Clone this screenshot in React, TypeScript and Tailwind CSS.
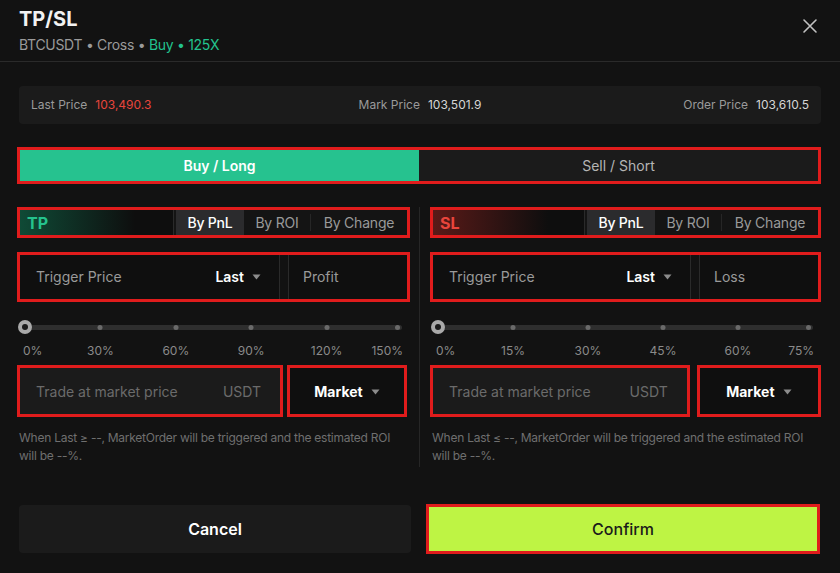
import React from "react";

const RED = "border-[#e01c1c]";

function Caret() {
  return (
    <svg width="9" height="6" viewBox="0 0 9 6" className="ml-[8px] mt-px">
      <path d="M0.5 0.5h8L4.5 5.5z" fill="#8c8c8c" />
    </svg>
  );
}

function ModeRow({ label, color, glow }: { label: string; color: string; glow: string }) {
  return (
    <div className={`flex h-[31px] border-[3px] ${RED} bg-[#0e0e0e]`}>
      <div className="flex flex-1 items-center border-r border-[#2a2a2a]" style={{ backgroundImage: `linear-gradient(90deg, ${glow} 0%, rgba(0,0,0,0) 115px)` }}>
        <span className="pl-[7px] text-[16px] font-bold" style={{ color }}>{label}</span>
      </div>
      <div className="flex items-stretch bg-[#141414] text-[14px] tracking-[-0.2px] text-[#9a9a9a]">
        <div className="ml-[2px] flex w-[68px] items-center justify-center bg-[#2b2b2d] font-medium text-white">By PnL</div>
        <div className="flex w-[66px] items-center justify-center">By ROI</div>
        <div className="my-[4px] w-px bg-[#262626]" />
        <div className="flex w-[96px] items-center justify-center">By Change</div>
      </div>
    </div>
  );
}

function TriggerRow({ right }: { right: string }) {
  return (
    <div className={`mt-[14px] flex h-[50px] border-[3px] ${RED} bg-[#121212]`}>
      <div className="flex flex-1 items-center border-r border-[#2a2a2a] bg-[#0f0f0f] pb-px pl-[16px] pr-[18px] text-[14px]">
        <span className="text-[#9a9a9a]">Trigger Price</span>
        <span className="ml-auto font-semibold text-white">Last</span>
        <Caret />
      </div>
      <div className="w-[8px]" />
      <div className="flex w-[119px] items-center border-l border-[#2a2a2a] bg-[#0f0f0f] pb-px pl-[14px] text-[14px] text-[#9a9a9a]">{right}</div>
    </div>
  );
}

function Slider({ labels }: { labels: string[] }) {
  return (
    <div className="mt-[18px]">
      <div className="relative mx-[8px] h-[14px]">
        <div className="absolute left-0 right-0 top-[5px] h-[5px] rounded-full bg-[#2e2e2e]" />
        {[1, 2, 3, 4].map((i) => (
          <div key={i} className="absolute top-[5px] h-[5px] w-[5px] -translate-x-1/2 rounded-full bg-[#6a6a6a]" style={{ left: `${i * 20}%` }} />
        ))}
        <div className="absolute right-[2px] top-[5px] h-[5px] w-[5px] rounded-full bg-[#6a6a6a]" />
        <div className="absolute left-[-7px] top-0 flex h-[14px] w-[14px] items-center justify-center rounded-full bg-[#a9a9a9]">
          <div className="h-[6px] w-[6px] rounded-full bg-[#1a1a1a]" />
        </div>
      </div>
      <div className="relative mx-[8px] mt-[10px] h-[14px] text-[12px] leading-[14px] text-[#8a8a8a]">
        {labels.map((l, i) => (
          <span
            key={l}
            className={i === 0 ? "absolute left-[-2px]" : i === 5 ? "absolute right-[-1px]" : "absolute -translate-x-1/2"}
            style={i > 0 && i < 5 ? { left: `${i * 20}%` } : undefined}
          >
            {l}
          </span>
        ))}
      </div>
    </div>
  );
}

function MarketRow({ inputW, gap, marketW }: { inputW: number; gap: number; marketW: number }) {
  return (
    <div className="mt-[7px] flex h-[52px]" style={{ gap }}>
      <div className={`flex items-center border-[3px] ${RED} bg-[#1b1b1b] pl-[16px] pr-[19px] text-[14px] text-[#6b6b6b]`} style={{ width: inputW }}>
        <span>Trade at market price</span>
        <span className="ml-auto">USDT</span>
      </div>
      <div className={`flex items-center justify-center border-[3px] ${RED} bg-[#0f0f0f] text-[14px] font-bold text-white`} style={{ width: marketW }}>
        Market
        <Caret />
      </div>
    </div>
  );
}

function Column({ label, color, glow, right, labels, sign, inputW, gap, marketW }: {
  label: string; color: string; glow: string; right: string; labels: string[]; sign: string;
  inputW: number; gap: number; marketW: number;
}) {
  return (
    <div className="flex flex-col">
      <ModeRow label={label} color={color} glow={glow} />
      <TriggerRow right={right} />
      <Slider labels={labels} />
      <MarketRow inputW={inputW} gap={gap} marketW={marketW} />
      <p className="mt-[12px] pl-[2px] pr-[14px] text-[12px] leading-[18px] tracking-[-0.25px] text-[#6f6f6f]">
        When Last {sign} --, MarketOrder will be triggered and the estimated ROI will be --%.
      </p>
    </div>
  );
}

export default function App() {
  return (
    <div className="flex h-[573px] w-[840px] flex-col overflow-hidden bg-[#121212] text-white" style={{ fontFamily: "Inter, 'Noto Sans', sans-serif" }}>
      <header className="flex h-[62px] items-start border-b border-[#2a2a2a] px-[19px] pt-[5px]">
        <div>
          <h1 className="text-[20px] font-bold leading-[28px] text-[#f2f2f2]">TP/SL</h1>
          <div className="mt-[2px] text-[14px] leading-[20px] tracking-[-0.3px] text-[#9a9a9a]">
            BTCUSDT • Cross • <span className="text-[#22c38e]">Buy • 125X</span>
          </div>
        </div>
        <button className="ml-auto mt-[13px] mr-[3px]">
          <svg width="16" height="16" viewBox="0 0 16 16" fill="none" stroke="#c2c2c2" strokeWidth="1.6" strokeLinecap="round">
            <path d="M2 2l12 12M14 2L2 14" />
          </svg>
        </button>
      </header>

      <div className="mx-[19px] mt-[24px] flex h-[38px] items-center rounded-[4px] bg-[#1b1b1b] px-[12px] text-[12px]">
        <div className="flex-1">
          <span className="text-[#9a9a9a]">Last Price</span>
          <span className="ml-[8px] text-[#e8453c]">103,490.3</span>
        </div>
        <div className="flex-1 text-center">
          <span className="text-[#9a9a9a]">Mark Price</span>
          <span className="ml-[8px] text-[#d6d6d6]">103,501.9</span>
        </div>
        <div className="flex-1 text-right">
          <span className="text-[#9a9a9a]">Order Price</span>
          <span className="ml-[8px] text-[#d6d6d6]">103,610.5</span>
        </div>
      </div>

      <div className={`ml-[17px] mr-[19px] mt-[23px] flex h-[37px] border-[3px] ${RED} text-[14px]`}>
        <div className="flex flex-1 items-center justify-center bg-[#26c28f] font-semibold text-white">Buy / Long</div>
        <div className="flex flex-1 items-center justify-center bg-[#1b1b1b] text-[#b5b5b5]">Sell / Short</div>
      </div>

      <div className="mt-[23px] flex pl-[17px]">
        <div className="w-[393px]">
          <Column label="TP" color="#25c28d" glow="#0f4a36" right="Profit" sign="≥"
            labels={["0%", "30%", "60%", "90%", "120%", "150%"]} inputW={266} gap={4} marketW={120} />
        </div>
        <div className="mx-[9px] h-[260px] w-px bg-[#262626]" />
        <div className="w-[392px] pl-px">
          <Column label="SL" color="#e8453c" glow="#5a1a18" right="Loss" sign="≤"
            labels={["0%", "15%", "30%", "45%", "60%", "75%"]} inputW={261} gap={7} marketW={125} />
        </div>
      </div>

      <div className="mt-auto flex items-center pb-[19px] pl-[19px]">
        <button className="h-[48px] w-[392px] rounded-[4px] bg-[#1b1b1b] text-[16px] font-semibold text-white">Cancel</button>
        <button className={`ml-[15px] h-[50px] w-[394px] border-[3px] ${RED} bg-[#bef444] text-[16px] font-medium text-[#1a1a1a]`}>Confirm</button>
      </div>
    </div>
  );
}
